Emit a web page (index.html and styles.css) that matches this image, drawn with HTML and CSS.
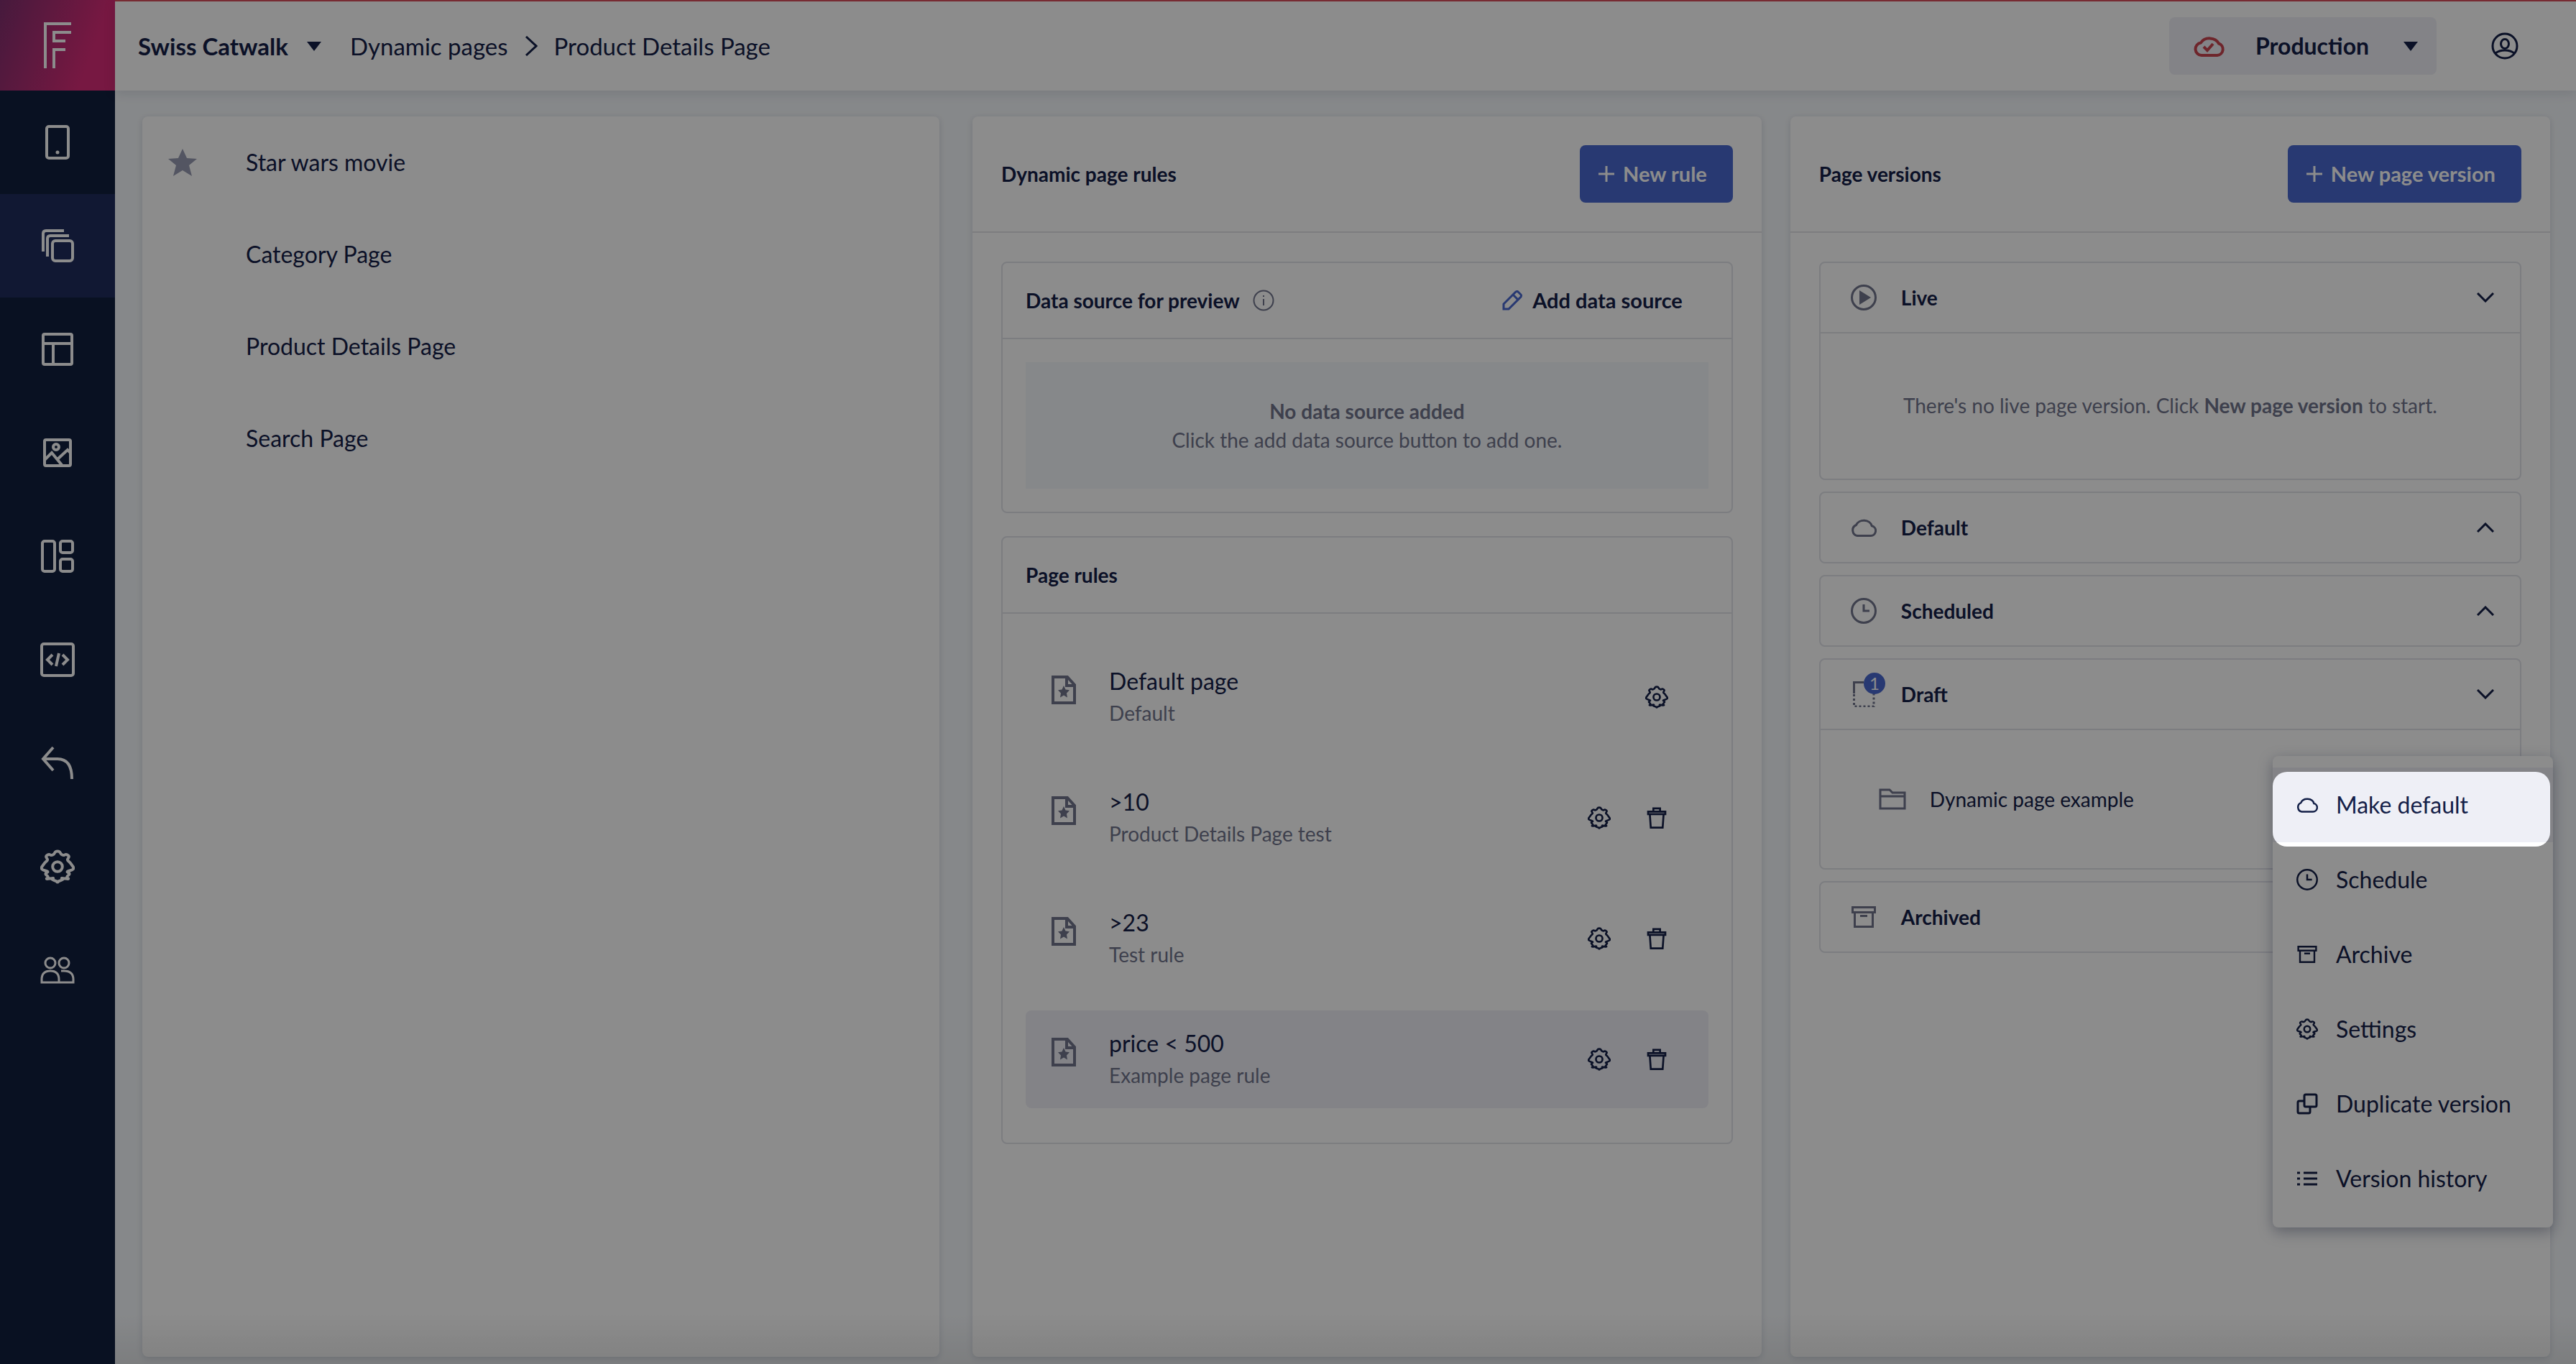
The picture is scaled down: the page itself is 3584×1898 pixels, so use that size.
FILE: index.html
```html
<!DOCTYPE html>
<html lang="en">
<head>
    <meta charset="UTF-8">
    <meta name="viewport" content="width=device-width, initial-scale=1.0">
    <title>Product Details Page</title>
    <link rel="stylesheet" href="styles.css">
</head>
<body>
    <!-- Shared icons -->
    <svg class="sprite" aria-hidden="true">
        <symbol id="gear" viewBox="0 0 24 24">
            <path d="M12 1.2q1.500 0 1.900 1.100t1.500 1.500 1.800-.1 2 .3.300 2-.1 1.900 1.500 1.500 1.900 2.600-1.900 2.600-1.500 1.500.1 1.900-.3 2-2 .3-1.800-.1-1.500 1.500-1.900 1.100-1.900-1.100-1.500-1.500-1.800.1-2-.3-.3-2 .1-1.900-1.500-1.500T1.200 12t1.900-2.600 1.500-1.500T4.500 6t.3-2 2-.3 1.800.1 1.500-1.500T12 1.200z"/>
            <circle cx="12" cy="12" r="3.400"/>
        </symbol>
        <symbol id="trash" viewBox="0 0 24 24">
            <path d="M3 5.500h18v2.700H3zM4.800 8.200l1 14h12.400l1-14M8.500 5.500V2.200h7v3.300"/>
        </symbol>
        <symbol id="page-star" viewBox="0 0 34 40">
            <path d="M2 2h20l10 11v25H2zM21 2v12h11"/>
            <path class="solid" d="M17 14l2.500 5.400 5.500.8-4 4.300 1 6-5-3-5 3 1-6-4-4.300 5.500-.8z"/>
        </symbol>
        <symbol id="cloud" viewBox="0 0 36 26">
            <path d="M9 24.500h18.500a7 7 0 0 0 1.800-13.800A11.500 10 0 0 0 7.500 9.500 7.900 7.900 0 0 0 9 24.500z"/>
        </symbol>
        <symbol id="clock" viewBox="0 0 36 36">
            <circle cx="18" cy="18" r="16.500"/>
            <path d="M18 9v9h8"/>
        </symbol>
        <symbol id="archive" viewBox="0 0 34 30">
            <path d="M1.500 1.500h31v7h-31zM4.500 8.500v20h25v-20M12 13.500h10"/>
        </symbol>
        <symbol id="chevron-down" viewBox="0 0 24 14"><path d="M1 1l11 11L23 1"/></symbol>
        <symbol id="chevron-up" viewBox="0 0 24 14"><path d="M1 13L12 2l11 11"/></symbol>
        <symbol id="plus" viewBox="0 0 22 22"><path d="M11 0v22M0 11h22"/></symbol>
    </svg>

    <nav class="sidebar">
        <a class="logo" href="#" aria-label="Home">
            <svg viewBox="0 0 38 64" width="38" height="64"><path d="M2 64V2h36M38 14H14v12h16M14 64V38h16"/></svg>
        </a>
        <a class="nav-item" href="#" aria-label="Apps">
            <svg viewBox="0 0 48 48" width="48" height="48"><rect x="9" y="2" width="30" height="44" rx="3"/><circle class="dot" cx="24" cy="38" r="2.500"/></svg>
        </a>
        <a class="nav-item active" href="#" aria-label="Pages">
            <svg viewBox="0 0 48 48" width="48" height="48"><rect x="17" y="17" width="28" height="28" rx="4"/><path d="M10 39V14q0-4 4-4h26M4 32V7q0-4 4-4h25"/></svg>
        </a>
        <a class="nav-item" href="#" aria-label="Layouts">
            <svg viewBox="0 0 48 48" width="48" height="48"><rect x="4" y="3" width="40" height="42" rx="2"/><path d="M4 16h40M18 16v29"/></svg>
        </a>
        <a class="nav-item" href="#" aria-label="Media">
            <svg viewBox="0 0 48 48" width="48" height="48"><rect x="6" y="6" width="36" height="36" rx="2"/><circle cx="22" cy="16" r="4"/><path d="M6 34l10-10 14 17M24 33l14-13 4 4"/></svg>
        </a>
        <a class="nav-item" href="#" aria-label="Blocks">
            <svg viewBox="0 0 48 48" width="48" height="48"><rect x="3" y="3" width="17" height="42" rx="3"/><rect x="28" y="3" width="17" height="16" rx="3"/><rect x="28" y="28" width="17" height="17" rx="3"/></svg>
        </a>
        <a class="nav-item" href="#" aria-label="Code">
            <svg viewBox="0 0 48 48" width="48" height="48"><rect x="2" y="2" width="44" height="44" rx="3"/><path d="M17 17l-7 7 7 7M31 17l7 7-7 7M26 15l-4 18"/></svg>
        </a>
        <a class="nav-item" href="#" aria-label="Redirects">
            <svg viewBox="0 0 48 48" width="48" height="48"><path d="M18 2L4 18l14 16M4 18h20q20 0 20 28"/></svg>
        </a>
        <a class="nav-item" href="#" aria-label="Settings">
            <svg class="thin" width="48" height="48"><use href="#gear"/></svg>
        </a>
        <a class="nav-item" href="#" aria-label="Users">
            <svg class="medium" viewBox="0 0 48 48" width="48" height="48"><circle cx="14" cy="14" r="7"/><path d="M2 41v-4q0-12 12-12t12 12v4zM26 41h20v-4q0-12-13-12h-4"/><circle cx="33" cy="14" r="7"/></svg>
        </a>
    </nav>

    <div class="page">
        <header class="topbar">
            <button class="project" type="button">Swiss Catwalk <span class="caret"></span></button>
            <a class="crumb" href="#">Dynamic pages</a>
            <svg class="crumb-arrow" viewBox="0 0 18 28" width="18" height="28"><path d="M2 1l14 13L2 27"/></svg>
            <a class="crumb" href="#">Product Details Page</a>
            <button class="environment" type="button">
                <svg viewBox="0 0 44 32" width="44" height="32"><path d="M11 29h22a8.500 8.500 0 0 0 2-16.500A14 12 0 0 0 10 11.500 8.800 8.800 0 0 0 11 29z"/><path d="M14 17l5 5 8-9"/></svg>
                <span>Production</span>
                <span class="caret"></span>
            </button>
            <button class="account" type="button" aria-label="Account">
                <svg viewBox="0 0 38 38" width="38" height="38"><circle cx="19" cy="19" r="17"/><ellipse cx="19" cy="16" rx="5.500" ry="6.500"/><path d="M6 29q5-4 13-4t13 4"/></svg>
            </button>
        </header>

        <main class="content">
            <ul class="panel page-list">
                <li>
                    <svg class="star" viewBox="0 0 40 38" width="40" height="38"><path d="M20 0l6 13 14 1-11 9 4 15-13-8-13 8 4-15L0 14l14-1z"/></svg>
                    <a href="#">Star wars movie</a>
                </li>
                <li><a href="#">Category Page</a></li>
                <li><a href="#">Product Details Page</a></li>
                <li><a href="#">Search Page</a></li>
            </ul>

            <div class="workspace">
                <section class="panel">
                    <div class="panel-header">
                        <h2>Dynamic page rules</h2>
                        <button class="primary" type="button"><svg width="22" height="22"><use href="#plus"/></svg>New rule</button>
                    </div>
                    <div class="rules">
                        <div class="box">
                            <div class="box-header">
                                <h3>Data source for preview</h3>
                                <svg class="info" viewBox="0 0 30 30" width="30" height="30"><circle cx="15" cy="15" r="13.500"/><path d="M15 13v9M15 8v2"/></svg>
                                <button class="add-source" type="button">
                                    <svg viewBox="0 0 28 28" width="28" height="28"><path d="M2 26V19L19 2q2-1 3 0l4 4q1 1 0 3L9 26zM15 6l7 7"/></svg>
                                    Add data source
                                </button>
                            </div>
                            <div class="empty">
                                <strong>No data source added</strong>
                                <p>Click the add data source button to add one.</p>
                            </div>
                        </div>

                        <div class="box">
                            <div class="box-header"><h3>Page rules</h3></div>
                            <ul class="rule-list">
                                <li class="rule">
                                    <svg class="rule-icon" width="34" height="40"><use href="#page-star"/></svg>
                                    <div class="rule-text"><h4>Default page</h4><p>Default</p></div>
                                    <button class="icon-button" type="button" aria-label="Settings"><svg width="32" height="32"><use href="#gear"/></svg></button>
                                </li>
                                <li class="rule">
                                    <svg class="rule-icon" width="34" height="40"><use href="#page-star"/></svg>
                                    <div class="rule-text"><h4>&gt;10</h4><p>Product Details Page test</p></div>
                                    <button class="icon-button" type="button" aria-label="Settings"><svg width="32" height="32"><use href="#gear"/></svg></button>
                                    <button class="icon-button" type="button" aria-label="Delete"><svg width="32" height="32"><use href="#trash"/></svg></button>
                                </li>
                                <li class="rule">
                                    <svg class="rule-icon" width="34" height="40"><use href="#page-star"/></svg>
                                    <div class="rule-text"><h4>&gt;23</h4><p>Test rule</p></div>
                                    <button class="icon-button" type="button" aria-label="Settings"><svg width="32" height="32"><use href="#gear"/></svg></button>
                                    <button class="icon-button" type="button" aria-label="Delete"><svg width="32" height="32"><use href="#trash"/></svg></button>
                                </li>
                                <li class="rule selected">
                                    <svg class="rule-icon" width="34" height="40"><use href="#page-star"/></svg>
                                    <div class="rule-text"><h4>price &lt; 500</h4><p>Example page rule</p></div>
                                    <button class="icon-button" type="button" aria-label="Settings"><svg width="32" height="32"><use href="#gear"/></svg></button>
                                    <button class="icon-button" type="button" aria-label="Delete"><svg width="32" height="32"><use href="#trash"/></svg></button>
                                </li>
                            </ul>
                        </div>
                    </div>
                </section>

                <section class="panel">
                    <div class="panel-header">
                        <h2>Page versions</h2>
                        <button class="primary" type="button"><svg width="22" height="22"><use href="#plus"/></svg>New page version</button>
                    </div>
                    <div class="versions">
                        <div class="box">
                            <button class="version-header" type="button">
                                <span class="version-icon"><svg viewBox="0 0 36 36" width="36" height="36"><circle cx="18" cy="18" r="16.500"/><path class="solid" d="M12 8v20l16-10z"/></svg></span>
                                Live
                                <svg class="chevron" width="24" height="14"><use href="#chevron-down"/></svg>
                            </button>
                            <p class="version-empty">There's no live page version. Click <strong>New page version</strong> to start.</p>
                        </div>
                        <div class="box">
                            <button class="version-header" type="button">
                                <span class="version-icon"><svg width="36" height="26"><use href="#cloud"/></svg></span>
                                Default
                                <svg class="chevron" width="24" height="14"><use href="#chevron-up"/></svg>
                            </button>
                        </div>
                        <div class="box">
                            <button class="version-header" type="button">
                                <span class="version-icon"><svg width="36" height="36"><use href="#clock"/></svg></span>
                                Scheduled
                                <svg class="chevron" width="24" height="14"><use href="#chevron-up"/></svg>
                            </button>
                        </div>
                        <div class="box">
                            <button class="version-header" type="button">
                                <span class="version-icon">
                                    <svg viewBox="0 0 36 36" width="36" height="36"><path d="M4.500 17V1.500H18"/><path stroke-dasharray="3 3" d="M4.500 18v17H32V16"/></svg>
                                    <span class="badge">1</span>
                                </span>
                                Draft
                                <svg class="chevron" width="24" height="14"><use href="#chevron-down"/></svg>
                            </button>
                            <div class="draft">
                                <span class="version-icon"><svg viewBox="0 0 38 30" width="38" height="30"><path d="M2 28V2h13l4 4h17v22zM2 11h34"/></svg></span>
                                <a href="#">Dynamic page example</a>

                                <div class="menu">
                                    <button class="menu-item hover" type="button"><svg width="30" height="22"><use href="#cloud"/></svg>Make default</button>
                                    <button class="menu-item" type="button"><svg width="30" height="30"><use href="#clock"/></svg>Schedule</button>
                                    <button class="menu-item" type="button"><svg width="30" height="24"><use href="#archive"/></svg>Archive</button>
                                    <button class="menu-item" type="button"><svg class="thin" width="30" height="30"><use href="#gear"/></svg>Settings</button>
                                    <button class="menu-item" type="button"><svg viewBox="0 0 30 30" width="30" height="30"><rect x="11" y="2" width="17" height="17" rx="2"/><path d="M11 11H4q-2 0-2 2v13q0 2 2 2h13q2 0 2-2v-7"/></svg>Duplicate version</button>
                                    <button class="menu-item" type="button"><svg viewBox="0 0 30 24" width="30" height="24"><path d="M1 4h4M1 12h4M1 20h4M10 4h19M10 12h19M10 20h19"/></svg>Version history</button>
                                    <div class="spotlight"></div>
                                </div>
                            </div>
                        </div>
                        <div class="box">
                            <button class="version-header" type="button">
                                <span class="version-icon"><svg width="34" height="30"><use href="#archive"/></svg></span>
                                Archived
                                <svg class="chevron" width="24" height="14"><use href="#chevron-up"/></svg>
                            </button>
                        </div>
                    </div>
                </section>
            </div>
        </main>
    </div>
</body>
</html>
```

FILE: styles.css
```css
* {
box-sizing: border-box;
}

body {
margin: 0;
display: flex;
min-height: 100vh;
overflow: hidden;
background-color: #f5f8fb;
color: #142048;
font-family: Lato, sans-serif;
font-size: 32px;
line-height: 40px;
}

h2, h3, h4, p, ul {
margin: 0;
padding: 0;
list-style: none;
}

a {
color: inherit;
text-decoration: none;
}

button {
font: inherit;
color: inherit;
border: none;
background: none;
padding: 0;
cursor: pointer;
}

svg {
flex: none;
fill: none;
stroke: currentColor;
stroke-width: 3;
}

.sprite {
position: absolute;
width: 0;
height: 0;
}

.solid,
.dot {
fill: currentColor;
stroke: none;
}

.thin {
stroke-width: 2;
}

/* Sidebar */
.sidebar {
width: 160px;
flex: none;
background-color: #121f3e;
color: #ffffff;
}

.logo {
display: flex;
align-items: center;
justify-content: center;
height: 126px;
background: linear-gradient(110deg, #80306f, #d92c78 75%);
}

.logo svg {
stroke-width: 4;
}

.nav-item {
display: flex;
align-items: center;
justify-content: center;
height: 144px;
}

.nav-item.active {
background-color: #202d5e;
}

.nav-item svg {
stroke-width: 4;
}

.nav-item .thin {
stroke-width: 2;
}

.nav-item .medium {
stroke-width: 3;
}

.page {
position: relative;
flex: 1;
min-width: 0;
display: flex;
flex-direction: column;
}

/* Soft shade along the bottom edge */
.page::after {
content: "";
position: absolute;
left: 0;
right: 0;
bottom: 0;
height: 70px;
background: linear-gradient(transparent, rgba(0, 0, 0, 0.08));
pointer-events: none;
}

/* Top bar */
.topbar {
display: flex;
align-items: center;
height: 126px;
padding: 0 80px 0 32px;
background-color: #ffffff;
border-top: 2px solid #d94f5c;
box-shadow: 0 4px 16px rgba(20, 32, 72, 0.12);
}

.project {
display: flex;
align-items: center;
gap: 26px;
margin-right: 40px;
font-size: 33px;
font-weight: bold;
}

.caret {
border: 10px solid transparent;
border-top: 13px solid currentColor;
border-bottom: 0;
}

.crumb {
font-size: 33px;
}

.crumb-arrow {
margin: 0 23px;
}

.environment {
display: flex;
align-items: center;
width: 372px;
height: 80px;
margin-left: auto;
padding: 0 26px 0 34px;
border-radius: 8px;
background-color: #eeeff6;
font-weight: bold;
}

.environment svg {
margin-right: 42px;
color: #c9444f;
stroke-width: 4;
}

.environment .caret {
margin-left: auto;
}

.account {
display: flex;
margin-left: 76px;
}

/* Panels */
.content {
flex: 1;
display: grid;
grid-template-columns: 96fr 190fr;
gap: 46px;
padding: 36px 36px 10px 38px;
}

.workspace {
display: grid;
grid-template-columns: 27fr 26fr;
gap: 40px;
}

.panel {
border-radius: 8px;
background-color: #ffffff;
box-shadow: 0 2px 10px rgba(20, 32, 72, 0.15);
}

.page-list li {
position: relative;
display: flex;
align-items: center;
height: 128px;
padding-left: 144px;
}

.star {
position: absolute;
left: 36px;
fill: #989cb2;
stroke: none;
}

.panel-header {
display: flex;
align-items: center;
justify-content: space-between;
height: 162px;
padding: 0 40px;
border-bottom: 2px solid #e4e4e8;
}

h2, h3 {
font-size: 28px;
font-weight: bold;
}

.primary {
display: flex;
align-items: center;
gap: 12px;
height: 80px;
padding: 0 36px 0 26px;
border-radius: 8px;
background-color: #4969cf;
color: #ffffff;
font-size: 29px;
font-weight: bold;
}

.box {
border: 2px solid #e2e3ea;
border-radius: 8px;
}

/* Rules */
.rules {
display: flex;
flex-direction: column;
gap: 32px;
padding: 40px;
}

.box-header {
display: flex;
align-items: center;
height: 106px;
padding: 0 32px;
border-bottom: 2px solid #e2e3ea;
}

.info {
margin-left: 18px;
color: #71758d;
stroke-width: 2;
}

.add-source {
display: flex;
align-items: center;
gap: 14px;
margin-left: auto;
padding-right: 36px;
font-size: 29px;
font-weight: bold;
}

.add-source svg {
color: #4969cf;
}

.empty {
margin: 32px;
padding: 48px 32px;
background-color: #f5f8fb;
color: #71758d;
font-size: 28px;
text-align: center;
}

.rule-list {
display: flex;
flex-direction: column;
gap: 32px;
padding: 48px 32px;
}

.rule {
display: flex;
align-items: center;
padding: 24px 32px 24px 36px;
border-radius: 8px;
line-height: 44px;
}

.rule.selected {
background-color: #eeeff6;
}

.rule-icon {
margin-right: 46px;
align-self: flex-start;
margin-top: 14px;
color: #71758d;
stroke-width: 4;
}

.rule-text {
flex: 1;
}

h4 {
font-size: 32px;
font-weight: normal;
}

.rule-text p {
color: #71758d;
font-size: 28px;
}

.icon-button {
display: flex;
justify-content: center;
width: 80px;
}

.icon-button svg {
stroke-width: 2;
}

/* Versions */
.versions {
display: flex;
flex-direction: column;
gap: 16px;
padding: 40px;
}

.version-header {
display: flex;
align-items: center;
gap: 32px;
width: 100%;
height: 96px;
padding: 0 36px 0 40px;
font-size: 28px;
font-weight: bold;
}

.version-icon {
position: relative;
display: flex;
justify-content: center;
width: 40px;
color: #71758d;
}

.chevron {
margin-left: auto;
}

.version-empty {
padding: 80px 32px 82px;
border-top: 2px solid #e2e3ea;
color: #71758d;
font-size: 28px;
text-align: center;
}

.badge {
position: absolute;
top: -12px;
right: -10px;
width: 30px;
height: 30px;
border-radius: 50%;
background-color: #4969cf;
color: #ffffff;
font-size: 24px;
font-weight: normal;
line-height: 30px;
text-align: center;
}

.draft {
position: relative;
display: flex;
align-items: center;
gap: 32px;
height: 194px;
padding: 0 80px;
border-top: 2px solid #e2e3ea;
font-size: 28px;
}

/* Version menu */
.menu {
position: absolute;
top: 36px;
right: -46px;
z-index: 10;
width: 390px;
padding: 16px 0;
border-radius: 8px;
background-color: #ffffff;
box-shadow: 0 6px 20px rgba(20, 32, 72, 0.35);
}

.menu-item {
display: flex;
align-items: center;
gap: 25px;
width: 100%;
height: 104px;
padding: 0 33px;
font-size: 32px;
}

.menu-item.hover {
background-color: #eeeff6;
}

/* Dims everything except the highlighted menu item */
.spotlight {
position: absolute;
top: 22px;
left: 0;
right: 4px;
height: 104px;
border-radius: 20px;
box-shadow: 0 0 0 4000px rgba(0, 0, 0, 0.45);
pointer-events: none;
}
```
